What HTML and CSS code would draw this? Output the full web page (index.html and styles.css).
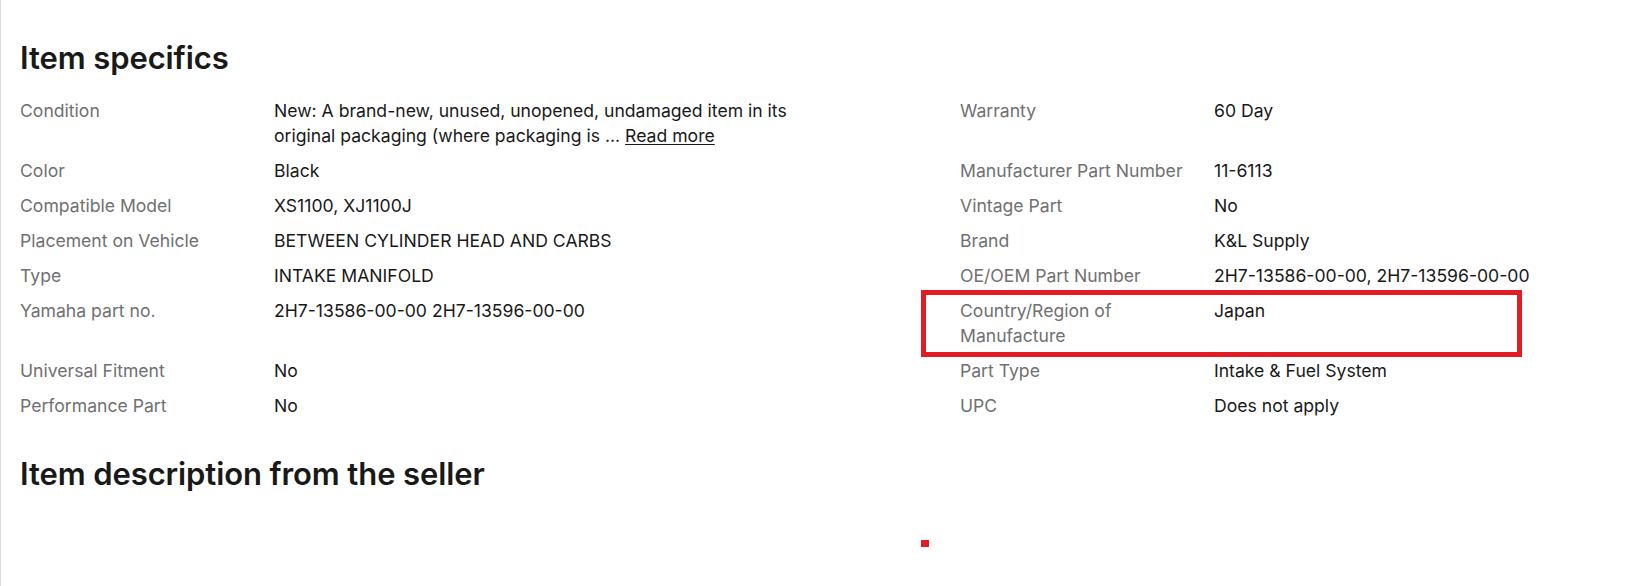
FILE: index.html
```html
<!DOCTYPE html>
<html lang="en">
<head>
<meta charset="utf-8">
<title>Item specifics</title>
<link rel="stylesheet" href="styles.css">
</head>
<body>
<div class="page">
  <section class="specs">
    <h2 class="title">Item specifics</h2>
    <div class="rows">
      <div class="row">
        <div class="pair"><div class="label">Condition</div><div class="value">New: A brand-new, unused, unopened, undamaged item in its original packaging (where packaging is ... <span class="more">Read more</span></div></div>
        <div class="pair"><div class="label">Warranty</div><div class="value">60 Day</div></div>
      </div>
      <div class="row">
        <div class="pair"><div class="label">Color</div><div class="value">Black</div></div>
        <div class="pair"><div class="label">Manufacturer Part Number</div><div class="value">11-6113</div></div>
      </div>
      <div class="row">
        <div class="pair"><div class="label">Compatible Model</div><div class="value">XS1100, XJ1100J</div></div>
        <div class="pair"><div class="label">Vintage Part</div><div class="value">No</div></div>
      </div>
      <div class="row">
        <div class="pair"><div class="label">Placement on Vehicle</div><div class="value">BETWEEN CYLINDER HEAD AND CARBS</div></div>
        <div class="pair"><div class="label">Brand</div><div class="value">K&amp;L Supply</div></div>
      </div>
      <div class="row">
        <div class="pair"><div class="label">Type</div><div class="value">INTAKE MANIFOLD</div></div>
        <div class="pair"><div class="label">OE/OEM Part Number</div><div class="value">2H7-13586-00-00, 2H7-13596-00-00</div></div>
      </div>
      <div class="row">
        <div class="pair"><div class="label">Yamaha part no.</div><div class="value">2H7-13586-00-00 2H7-13596-00-00</div></div>
        <div class="pair highlighted"><div class="label">Country/Region of Manufacture</div><div class="value">Japan</div><span class="mark-box"></span></div>
      </div>
      <div class="row">
        <div class="pair"><div class="label">Universal Fitment</div><div class="value">No</div></div>
        <div class="pair"><div class="label">Part Type</div><div class="value">Intake &amp; Fuel System</div></div>
      </div>
      <div class="row">
        <div class="pair"><div class="label">Performance Part</div><div class="value">No</div></div>
        <div class="pair"><div class="label">UPC</div><div class="value">Does not apply</div></div>
      </div>
    </div>
  </section>
  <section class="desc">
    <h2 class="title">Item description from the seller</h2>
  </section>
  <span class="mark-dot"></span>
</div>
</body>
</html>
```

FILE: styles.css
```css
html, body {
  margin: 0;
  padding: 0;
  background: #ffffff;
}

body {
  font-family: Inter, "Noto Sans", "Liberation Sans", sans-serif;
  color: #191919;
  width: 1642px;
  height: 586px;
  overflow: hidden;
}

.page {
  position: relative;
  height: 586px;
  border-left: 1px solid #dcdcdc;
  padding: 40px 0 0 19px;
  box-sizing: border-box;
}

.title {
  margin: 0;
  font-size: 31px;
  line-height: 36px;
  font-weight: 600;
  color: #191919;
  letter-spacing: -0.1px;
}

.rows {
  display: flex;
  flex-direction: column;
  gap: 10px;
  margin-top: 22px;
}

.row {
  display: grid;
  grid-template-columns: 770px 600px;
  column-gap: 170px;
}

.pair {
  position: relative;
  display: grid;
  grid-template-columns: 254px 1fr;
  font-size: 17.6px;
  line-height: 25px;
}

.label {
  color: #707070;
  padding-right: 18px;
}

.value {
  color: #191919;
}

.more {
  color: #191919;
  text-decoration: underline;
  text-underline-offset: 2px;
}

.desc {
  margin-top: 38px;
}

.mark-box {
  position: absolute;
  left: -39px;
  top: -8px;
  width: 601px;
  height: 67px;
  border: 5px solid #e31b23;
  box-sizing: border-box;
  pointer-events: none;
}

.mark-dot {
  position: absolute;
  left: 920px;
  top: 540px;
  width: 8px;
  height: 7px;
  background: #e31b23;
}
```
